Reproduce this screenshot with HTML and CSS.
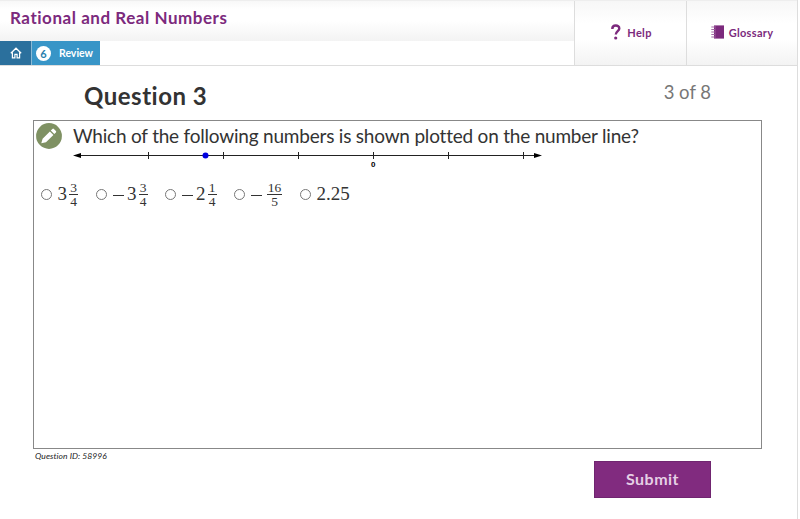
FILE: index.html
```html
<!DOCTYPE html>
<html lang="en">

<head>
    <meta charset="UTF-8">
    <meta name="viewport" content="width=device-width, initial-scale=1.0">
    <title>Rational and Real Numbers</title>
    <link rel="stylesheet" href="styles.css">
</head>

<body>
    <div class="page">
        <header>
            <div class="course">
                <h1><span>Rational and Real Numbers</span></h1>
                <nav>
                    <a class="home" href="#" aria-label="Home">
                        <svg width="12" height="12" viewBox="0 0 12 12" fill="none" stroke="#fff" stroke-width="1.2">
                            <path d="M.8 6.3 6 1.2l5.200 5.100M2.400 5.400v5.400h2.500V7.400h2.200v3.400h2.500V5.400" />
                        </svg>
                    </a>
                    <a class="review" href="#"><span class="step">6</span><span class="review-label">Review</span></a>
                </nav>
            </div>
            <a class="tool help" href="#">
                <svg width="10" height="16" viewBox="0 0 10 16">
                    <path d="M1.3 4.9C1.3.4 8.300.6 8.300 4.400c0 2.600-3.500 2.800-3.500 6.100" fill="none" stroke="#7c2a7d" stroke-width="2.4" />
                    <circle cx="4.7" cy="14" r="1.6" fill="#7c2a7d" />
                </svg>
                <span>Help</span>
            </a>
            <a class="tool glossary" href="#">
                <svg width="13" height="14" viewBox="0 0 13 14">
                    <path d="M3 .4h10v13.2H3z" fill="#7c2a7d" />
                    <path d="M.3 2h3.5M.3 4.5h3.5M.3 7h3.5M.3 9.500h3.500M.3 12h3.500" stroke="#a56ba6" stroke-width="1.1" />
                    <path d="M4.300 1v12" stroke="#a56ba6" stroke-width=".5" />
                </svg>
                <span>Glossary</span>
            </a>
        </header>

        <main>
            <div class="heading">
                <h2><span>Question 3</span></h2>
                <span class="count">3 of 8</span>
            </div>

            <div class="question">
                <div class="prompt">
                    <svg class="pencil" width="26" height="26" viewBox="0 0 26 26">
                        <circle cx="13" cy="13" r="12.900" fill="#7f9163" />
                        <path d="M5.300 20.300 6.600 15.700 13.900 8.400 17.400 11.900 10 19.200zM14.800 7.500 16.400 5.900Q17.100 5.200 17.900 5.900L19.900 7.900Q20.600 8.700 19.900 9.400L18.300 11z" fill="#fff" />
                    </svg>
                    <p><span>Which of the following numbers is shown plotted on the number line?</span></p>
                </div>
                <svg class="number-line" width="470" height="22" viewBox="0 0 470 22">
                    <path d="M5 7.500h460M75.500 4v7M150.500 4v7M225.500 4v7M300.500 4v7M375.500 4v7M450.500 4v7" stroke="#222" stroke-width="1" />
                    <path d="M0 7.500 8 5v5zM469 7.500 461 5v5z" fill="#000" />
                    <circle cx="132.500" cy="7.500" r="3" fill="#0000e0" />
                    <text x="300.300" y="18.500" text-anchor="middle">0</text>
                </svg>
                <!-- answer choices -->
                <form class="choices">
                    <label><input type="radio" name="answer"><span>3</span><span class="frac"><b>3</b><b>4</b></span></label>
                    <label><input type="radio" name="answer"><i></i><span>3</span><span class="frac"><b>3</b><b>4</b></span></label>
                    <label><input type="radio" name="answer"><i></i><span>2</span><span class="frac"><b>1</b><b>4</b></span></label>
                    <label><input type="radio" name="answer"><i></i><span class="frac wide"><b>16</b><b>5</b></span></label>
                    <label><input type="radio" name="answer"><span>2.25</span></label>
                </form>
            </div>

            <div class="bottom">
                <span class="question-id">Question ID: 58996</span>
                <button type="button"><span>Submit</span></button>
            </div>
        </main>
    </div>
</body>

</html>
```
FILE: styles.css
```css
* {
    box-sizing: border-box;
}

body {
    margin: 0;
    background: #fff;
    color: #333;
    font-family: Lato, Roboto, sans-serif;
}

.page {
    width: 798px;
    height: 519px;
    border-right: 1px solid #ddd;
}

header {
    display: flex;
    height: 66px;
    border-top: 1px solid #eee;
    border-bottom: 1px solid #ddd;
}

a {
    text-decoration: none;
}

.course {
    width: 574px;
}

h1 {
    height: 40px;
    margin: 0;
    padding: 7px 0 0 10px;
    background: linear-gradient(#f8f8f8, #fff 20%, #fff 50%, #f3f3f3);
    color: #7c2a7d;
    font-size: 17px;
    line-height: 20px;
    font-weight: 700;
    letter-spacing: 0.54px;
}

nav {
    display: flex;
    height: 24px;
}

.home {
    display: flex;
    width: 32px;
    align-items: center;
    justify-content: center;
    background: #2b709d;
    border-right: 1px solid #8bbad5;
}

.review {
    display: flex;
    width: 68px;
    align-items: center;
    padding-left: 4px;
    gap: 8px;
    background: #3895c7;
    color: #fff;
    font-size: 10.5px;
    font-weight: 700;
}

.step {
    width: 15px;
    height: 15px;
    border-radius: 50%;
    background: #fff;
    color: #287fae;
    font-size: 11px;
    line-height: 15px;
    text-align: center;
}

.tool {
    display: flex;
    width: 112px;
    align-items: center;
    justify-content: center;
    padding: 0 0 2px 2px;
    border-left: 1px solid #ddd;
    background: linear-gradient(#f7f7f7, #fff 35%, #fff 60%, #f3f3f3);
    color: #7c2a7d;
    font-size: 11px;
    font-weight: 700;
    letter-spacing: 0.3px;
    gap: 6px;
}

.glossary {
    width: 111px;
    padding-left: 0;
    gap: 5px;
}

main {
    padding: 0 35px 0 33px;
}

.heading {
    display: flex;
    height: 54px;
    justify-content: space-between;
    padding: 14px 51px 0;
}

h2 {
    margin: 0;
    font-size: 24px;
    line-height: 32px;
    font-weight: 700;
    letter-spacing: 0.5px;
}

.count {
    color: #777;
    font-size: 18.5px;
    line-height: 25px;
}

.question {
    height: 329px;
    border: 1px solid #888;
    padding: 2px 0 0 2px;
}

.prompt {
    display: flex;
    height: 25px;
    gap: 11px;
}

.pencil {
    flex: none;
}

p {
    margin: 0;
    color: #333;
    font-size: 19px;
    line-height: 25px;
    letter-spacing: -0.21px;
    white-space: nowrap;
}

.number-line {
    display: block;
    margin-left: 37px;
}

.number-line text {
    font: bold 8px "Liberation Sans", Arial, sans-serif;
    fill: #000;
}

.choices {
    display: flex;
    height: 30px;
    margin-top: 9px;
    padding-left: 5px;
    color: #333;
    font-family: "Liberation Serif", "Times New Roman", serif;
    font-size: 19px;
    line-height: 30px;
}

.choices label {
    display: flex;
    align-items: center;
    width: 69px;
}

.choices label:first-child {
    width: 55px;
}

.choices label:nth-child(4) {
    width: 66px;
}

.choices input {
    appearance: none;
    flex: none;
    width: 11px;
    height: 11px;
    margin: 0 5.5px 0 0;
    border: 1px solid #777;
    border-radius: 50%;
    background: #fff;
}

/* minus sign */
.choices i {
    width: 11px;
    height: 1px;
    margin: 2px 3px 0 0.5px;
    background: #333;
}

.frac {
    display: flex;
    width: 9px;
    flex-direction: column;
    margin-left: 2px;
    font-size: 13.5px;
    line-height: 13px;
    text-align: center;
}

.frac b {
    font-weight: 400;
}

.frac b:first-child {
    border-bottom: 1px solid #333;
}

.wide {
    width: 15px;
}

.bottom {
    display: flex;
    justify-content: space-between;
    padding: 0 51px 0 2px;
}

.question-id {
    margin-top: 2px;
    color: #222;
    font-size: 8.5px;
    line-height: 10px;
    font-style: italic;
    letter-spacing: 0.06px;
}

button {
    width: 117px;
    height: 37px;
    margin-top: 12px;
    padding: 0 0 2px;
    border: 1px solid #702570;
    background: #812b7f;
    color: #e5cfe5;
    font: 700 16px Lato, Roboto, sans-serif;
    letter-spacing: 0.5px;
}
```
